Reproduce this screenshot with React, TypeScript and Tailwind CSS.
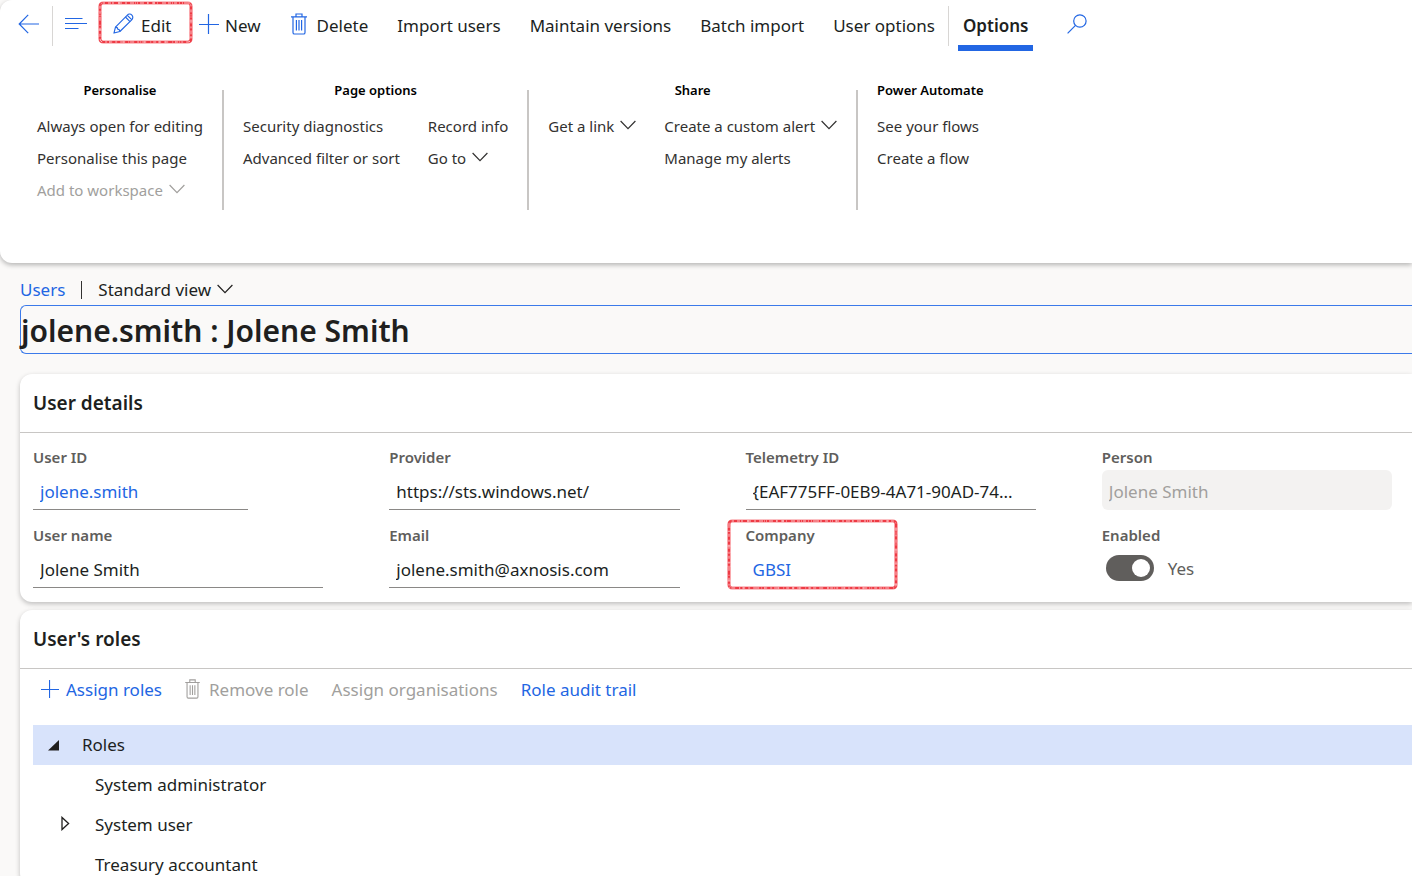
import { useState } from 'react';
import type { ReactNode } from 'react';
import clsx from 'clsx';

interface IconProps {
  className?: string;
}

function BackIcon({ className }: IconProps) {
  return (
    <svg viewBox="0 0 22 20" className={className} fill="none" stroke="currentColor" strokeWidth="1.2">
      <path d="M21 10H1.2M10.2 .8L1.2 10L10.2 19.2" />
    </svg>
  );
}

function LinesIcon({ className }: IconProps) {
  return (
    <svg viewBox="0 0 22 14" className={className} fill="none" stroke="currentColor" strokeWidth="1.2">
      <path d="M0 1.5H17.5M0 6.5H22M0 11.5H13.5" />
    </svg>
  );
}

function PencilIcon({ className }: IconProps) {
  return (
    <svg viewBox="0 0 22 22" className={className} fill="none" stroke="currentColor" strokeWidth="1.2" strokeLinejoin="round">
      <path d="M1 21L2.6 14.8L14.8 2.4C16.2 1 18.4 .8 19.8 2.2C21.2 3.6 21 5.8 19.6 7.2L7.2 19.4Z" />
      <path d="M13 4.2L17.8 9M15 2.4L19.6 7M2.6 14.8C4.2 14.8 5 15.4 5 17C6.6 17 7.2 17.8 7.2 19.4" />
    </svg>
  );
}

function PlusIcon({ className }: IconProps) {
  return (
    <svg viewBox="0 0 20 20" className={className} fill="none" stroke="currentColor" strokeWidth="1.2">
      <path d="M9.5 0V20M0 10.5H20" />
    </svg>
  );
}

function TrashIcon({ className }: IconProps) {
  return (
    <svg viewBox="0 0 16 22" className={className} fill="none" stroke="currentColor" strokeWidth="1.2">
      <path d="M0 3.8H16M5 3.8V1H11V3.8M2 3.8V19.4C2 20.3 2.5 21 3.4 21H12.6C13.5 21 14 20.3 14 19.4V3.8M5.4 7V17.6M8 7V17.6M10.6 7V17.6" />
    </svg>
  );
}

function SearchIcon({ className }: IconProps) {
  return (
    <svg viewBox="0 0 20 20" className={className} fill="none" stroke="currentColor" strokeWidth="1.2">
      <circle cx="12.9" cy="7" r="6.2" />
      <path d="M8.5 11.4L.6 19.4" />
    </svg>
  );
}

function ChevronIcon({ className }: IconProps) {
  return (
    <svg viewBox="0 0 16 10" className={className} fill="none" stroke="currentColor" strokeWidth="1.2">
      <path d="M.6 1L8 8.6L15.4 1" />
    </svg>
  );
}

// Hand-drawn red frame round a control
function Marker({ width, height, className }: { width: number; height: number; className?: string }) {
  const box = { x: 2, y: 2, width: width - 4, height: height - 4, rx: 3, fill: 'none' };
  return (
    <svg width={width} height={height} className={clsx('pointer-events-none absolute', className)} aria-hidden="true">
      <rect {...box} stroke="#f8848a" strokeWidth="3.2" />
      <rect {...box} stroke="#ee3a44" strokeWidth="2.2" strokeDasharray="9 1 5 2 13 1 3 1" />
      <rect {...box} stroke="#fbc4c7" strokeWidth="1" strokeDasharray="2 3 3 2 1 4 4 3" />
    </svg>
  );
}

const menuItems = ['Import users', 'Maintain versions', 'Batch import', 'User options'];

interface RibbonItem {
  label: string;
  menu?: boolean;
  disabled?: boolean;
}

const ribbonGroups: { title: string; columns: RibbonItem[][] }[] = [
  {
    title: 'Personalise',
    columns: [
      [
        { label: 'Always open for editing' },
        { label: 'Personalise this page' },
        { label: 'Add to workspace', menu: true, disabled: true },
      ],
    ],
  },
  {
    title: 'Page options',
    columns: [
      [{ label: 'Security diagnostics' }, { label: 'Advanced filter or sort' }],
      [{ label: 'Record info' }, { label: 'Go to', menu: true }],
    ],
  },
  {
    title: 'Share',
    columns: [
      [{ label: 'Get a link', menu: true }],
      [{ label: 'Create a custom alert', menu: true }, { label: 'Manage my alerts' }],
    ],
  },
  {
    title: 'Power Automate',
    columns: [[{ label: 'See your flows' }, { label: 'Create a flow' }]],
  },
];

function RibbonButton({ item }: { item: RibbonItem }) {
  return (
    <button
      disabled={item.disabled}
      className={clsx(
        'flex h-8 items-center gap-[6px] whitespace-nowrap text-[15px]',
        item.disabled ? 'text-[#a19f9d]' : 'text-[#323130]'
      )}
    >
      {item.label}
      {item.menu && <ChevronIcon className="mb-0.5 h-[10px] w-4" />}
    </button>
  );
}

interface FieldProps {
  id: string;
  label: string;
  value: string;
  link?: boolean;
  disabled?: boolean;
  widthClass?: string;
  children?: ReactNode;
}

function Field({ id, label, value, link, disabled, widthClass = 'w-full', children }: FieldProps) {
  return (
    <div className="relative">
      <label htmlFor={id} className="block h-6 text-[15px] leading-[22px] font-semibold text-[#605e5c]">
        {label}
      </label>
      <input
        id={id}
        defaultValue={value}
        disabled={disabled}
        className={clsx(
          'block h-10 border-b px-[7px] pt-1 text-[17px] outline-none',
          widthClass,
          disabled ? 'rounded-md border-transparent bg-[#f3f2f1] text-[#a19f9d]' : 'border-[#8a8886] bg-transparent',
          !disabled && (link ? 'text-[#2266e3]' : 'text-[#201f1e]')
        )}
      />
      {children}
    </div>
  );
}

function Card({ title, children }: { title: string; children: ReactNode }) {
  return (
    <section className="rounded-l-xl bg-white shadow-[0_2px_5px_rgba(0,0,0,0.24)]">
      <h2 className="flex h-[59px] items-center border-b border-[#c8c6c4] pl-[13px] text-[19px] font-semibold text-[#201f1e]">
        {title}
      </h2>
      {children}
    </section>
  );
}

export default function App() {
  const [enabled, setEnabled] = useState(true);
  const [rolesOpen, setRolesOpen] = useState(true);

  return (
    <div className="h-screen overflow-hidden bg-[#faf9f8] font-['Noto_Sans','Open_Sans',sans-serif] text-[#201f1e]">
      <header className="rounded-l-xl bg-white pb-[53px] shadow-[0_2px_5px_rgba(0,0,0,0.28)]">
        {/* Action bar */}
        <nav className="flex h-[51px] items-center pl-[18px] text-[17px] whitespace-nowrap">
          <button aria-label="Back" className="text-[#2266e3]">
            <BackIcon className="mb-1 h-5 w-[22px]" />
          </button>
          <div className="mx-3 h-10 w-px bg-[#d8d6d4]" />
          <button aria-label="Show list" className="text-[#2266e3]">
            <LinesIcon className="mb-1 h-[14px] w-[22px]" />
          </button>
          <button className="relative ml-3 flex h-10 w-[94px] items-center gap-[7px] pl-[14px]">
            <PencilIcon className="mb-1 size-[21px] text-[#2266e3]" />
            Edit
            <Marker width={95} height={43} className="-top-[5px] -left-px" />
          </button>
          <button className="ml-[6px] flex items-center gap-[6px]">
            <PlusIcon className="mb-1 size-5 text-[#2266e3]" />
            New
          </button>
          <button className="ml-[30px] flex items-center gap-[10px]">
            <TrashIcon className="mb-1 h-[22px] w-4 text-[#2266e3]" />
            Delete
          </button>
          {menuItems.map((item) => (
            <button key={item} className="ml-[29px]">
              {item}
            </button>
          ))}
          <div className="ml-[13px] h-10 w-px bg-[#d8d6d4]" />
          <button className="ml-[9px] flex h-full items-center border-y-6 border-t-transparent border-b-[#2266e3] px-[5px] font-semibold">
            Options
          </button>
          <button aria-label="Search" className="ml-[34px] text-[#2266e3]">
            <SearchIcon className="mb-1 size-5" />
          </button>
        </nav>

        {/* Options ribbon */}
        <div className="flex pt-[29px] pl-[18px]">
          {ribbonGroups.map((group, index) => (
            <div key={group.title} className="flex">
              {index > 0 && <div className="mt-[10px] h-[120px] w-[2px] bg-[#c8c6c4]" />}
              <div className="px-[19px]">
                <h3 className="mb-[10px] text-center text-[13px] leading-5 font-semibold text-black">{group.title}</h3>
                <div className="flex gap-7">
                  {group.columns.map((column) => (
                    <div key={column[0].label}>
                      {column.map((item) => (
                        <RibbonButton key={item.label} item={item} />
                      ))}
                    </div>
                  ))}
                </div>
              </div>
            </div>
          ))}
        </div>
      </header>

      <main className="pt-3 pl-5">
        <div className="flex h-[30px] items-center pb-px text-[17px]">
          <a href="#users" className="text-[#2266e3]">
            Users
          </a>
          <span className="mx-4 h-[18px] w-px bg-[#323130]" />
          <button className="flex items-center gap-[6px]">
            Standard view
            <ChevronIcon className="mb-0.5 h-[10px] w-4" />
          </button>
        </div>
        <h1 className="flex h-[49px] items-center rounded-l-md border border-r-0 border-[#3b7aea] pt-0.5 text-[30px] font-semibold whitespace-nowrap">
          jolene.smith : Jolene Smith
        </h1>

        <div className="mt-5 flex flex-col gap-2">
          <Card title="User details">
            <div className="grid grid-cols-4 gap-x-[66px] gap-y-[14px] pt-[13px] pr-5 pb-[14px] pl-[13px]">
              <Field id="user-id" label="User ID" value="jolene.smith" link widthClass="w-[215px]" />
              <Field id="provider" label="Provider" value="https://sts.windows.net/" />
              <Field id="telemetry" label="Telemetry ID" value="{EAF775FF-0EB9-4A71-90AD-74..." />
              <Field id="person" label="Person" value="Jolene Smith" disabled />
              <Field id="user-name" label="User name" value="Jolene Smith" />
              <Field id="email" label="Email" value="jolene.smith@axnosis.com" />
              <Field id="company" label="Company" value="GBSI" link widthClass="w-[138px]">
                <Marker width={171} height={71} className="-top-[5px] -left-[19px]" />
              </Field>
              <div>
                <label htmlFor="enabled" className="block h-6 text-[15px] leading-[22px] font-semibold text-[#605e5c]">
                  Enabled
                </label>
                <div className="flex items-center gap-[14px] pt-[6px] pl-1">
                  <input
                    id="enabled"
                    type="checkbox"
                    role="switch"
                    checked={enabled}
                    onChange={(e) => setEnabled(e.target.checked)}
                    className="h-[26px] w-12 appearance-none rounded-full bg-[#a19f9d] p-1 before:block before:size-[18px] before:rounded-full before:bg-white checked:bg-[#605e5c] checked:before:ml-[22px]"
                  />
                  <span className="pt-0.5 text-[17px] text-[#605e5c]">{enabled ? 'Yes' : 'No'}</span>
                </div>
              </div>
            </div>
          </Card>

          <Card title="User's roles">
            <div className="flex h-[42px] items-center pl-[21px] text-[17px] whitespace-nowrap">
              <button className="flex items-center gap-[7px] text-[#2266e3]">
                <PlusIcon className="mb-0.5 size-[18px]" />
                Assign roles
              </button>
              <button disabled className="ml-[23px] flex items-center gap-[9px] text-[#a19f9d]">
                <TrashIcon className="mb-0.5 h-5 w-[15px]" />
                Remove role
              </button>
              <button disabled className="ml-[23px] text-[#a19f9d]">
                Assign organisations
              </button>
              <button className="ml-[23px] text-[#2266e3]">Role audit trail</button>
            </div>
            <ul className="mt-[14px] pl-[13px] text-[17px]">
              <li>
                <button
                  onClick={() => setRolesOpen(!rolesOpen)}
                  className="flex h-10 w-full items-center gap-[23px] bg-[#d8e3fb] pl-[15px]"
                >
                  <svg viewBox="0 0 11 11" className="size-[11px]">
                    <path d="M11 0V10.5H0Z" fill="#201f1e" />
                  </svg>
                  Roles
                </button>
                {rolesOpen && (
                  <ul>
                    <li className="flex h-10 items-center pl-[62px]">System administrator</li>
                    <li>
                      <button className="flex h-10 w-full items-center gap-[25px] pl-7">
                        <svg viewBox="0 0 9 15" className="mb-1 h-[15px] w-[9px]">
                          <path d="M1 1.4V13.6L7.6 7.5Z" fill="none" stroke="#201f1e" strokeWidth="1.3" />
                        </svg>
                        System user
                      </button>
                    </li>
                    <li className="flex h-10 items-center pl-[62px]">Treasury accountant</li>
                  </ul>
                )}
              </li>
            </ul>
          </Card>
        </div>
      </main>
    </div>
  );
}
